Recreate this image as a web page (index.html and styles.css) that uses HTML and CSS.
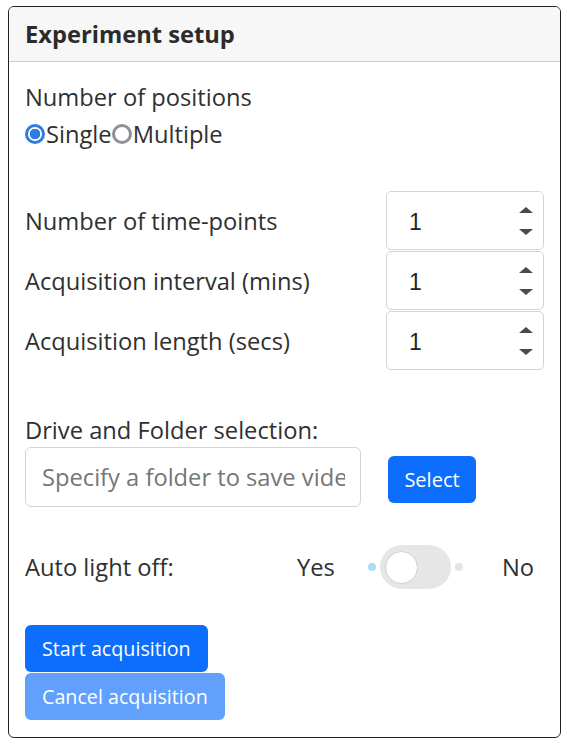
FILE: index.html
```html
<!DOCTYPE html>
<html>
<head>
<meta charset="utf-8">
<link rel="stylesheet" href="styles.css">
</head>
<body>
<div class="card">
  <div class="card-header">Experiment setup</div>
  <div class="card-body">
    <div class="label">Number of positions</div>
    <div class="radios">
      <span class="radio checked"></span><span class="radio-label">Single</span><span class="radio"></span><span class="radio-label">Multiple</span>
    </div>

    <div class="num-rows">
      <div class="num-row">
        <span class="label">Number of time-points</span>
        <div class="num-input"><span class="num-val">1</span><span class="spin"><span class="up"></span><span class="down"></span></span></div>
      </div>
      <div class="num-row">
        <span class="label">Acquisition interval (mins)</span>
        <div class="num-input"><span class="num-val">1</span><span class="spin"><span class="up"></span><span class="down"></span></span></div>
      </div>
      <div class="num-row">
        <span class="label">Acquisition length (secs)</span>
        <div class="num-input"><span class="num-val">1</span><span class="spin"><span class="up"></span><span class="down"></span></span></div>
      </div>
    </div>

    <div class="label folder-label">Drive and Folder selection:</div>
    <div class="folder-row">
      <div class="text-input"><span class="placeholder">Specify a folder to save videos</span></div>
      <button class="btn btn-select">Select</button>
    </div>

    <div class="light-row">
      <span class="label light-label">Auto light off:</span>
      <span class="label yes">Yes</span>
      <span class="toggle">
        <span class="dot dot-on"></span>
        <span class="track"><span class="knob"></span></span>
        <span class="dot dot-off"></span>
      </span>
      <span class="label no">No</span>
    </div>

    <div class="actions">
      <button class="btn btn-start">Start acquisition</button>
      <button class="btn btn-cancel">Cancel acquisition</button>
    </div>
  </div>
</div>
</body>
</html>
```
FILE: styles.css
```css
* { box-sizing: border-box; }
body {
  margin: 0;
  padding: 6px 8px 0 8px;
  font-family: "Open Sans", sans-serif;
  color: #212529;
  background: #fff;
}
.card {
  width: 553px;
  height: 732px;
  border: 1px solid #222;
  border-radius: 6px;
  overflow: hidden;
}
.card-header {
  height: 55px;
  background: #f7f7f7;
  border-bottom: 1px solid #cfcfcf;
  font-weight: 700;
  font-size: 23.7px;
  padding: 0 16px;
  display: flex;
  align-items: center;
  color: #2b2b2b;
}
.card-body {
  padding: 20px 16px 0 16px;
}
.label {
  font-size: 23.7px;
  line-height: 30px;
  color: #303030;
}
.radios {
  display: flex;
  align-items: center;
  margin-top: 7px;
  font-size: 23.7px;
  line-height: 30px;
  color: #303030;
}
.radio {
  width: 20px;
  height: 20px;
  border-radius: 50%;
  border: 3px solid #8f8f99;
  display: inline-block;
  flex: none;
  margin-right: 1px;
}
.radio.checked {
  border-color: #2f7de1;
  background: radial-gradient(circle, #2f7de1 0 5px, #fff 5.5px);
}
.num-rows {
  margin-top: 42px;
  display: flex;
  flex-direction: column;
  gap: 1px;
}
.num-row {
  display: flex;
  align-items: center;
  justify-content: space-between;
  height: 59px;
}
.num-input {
  width: 158px;
  height: 59px;
  border: 1px solid #d4d4d4;
  border-radius: 5px;
  display: flex;
  align-items: center;
  justify-content: space-between;
  padding: 0 10px 0 22px;
}
.num-val {
  font-family: "Liberation Sans", Arial, sans-serif;
  font-size: 23px;
  color: #222;
  padding-top: 3px;
}
.spin {
  display: flex;
  flex-direction: column;
  justify-content: space-between;
  height: 28px;
}
.up, .down {
  width: 0;
  height: 0;
  border-left: 7px solid transparent;
  border-right: 7px solid transparent;
}
.up { border-bottom: 6px solid #4a4a4a; }
.down { border-top: 6px solid #4a4a4a; }
.folder-label {
  margin-top: 45px;
}
.folder-row {
  display: flex;
  align-items: center;
  gap: 27px;
  margin-top: 2px;
}
.text-input {
  width: 336px;
  height: 60px;
  border: 1px solid #d4d4d4;
  border-radius: 6px;
  font-size: 23.7px;
  color: #767676;
  padding: 0 15px 0 16px;
  display: flex;
  align-items: center;
}
.placeholder {
  display: block;
  width: 100%;
  overflow: hidden;
  white-space: nowrap;
}
.btn {
  font-family: "Open Sans", sans-serif;
  border: none;
  color: #fff;
  background: #0d6efd;
  border-radius: 6px;
  padding: 0 17px;
  cursor: pointer;
}
.btn-select {
  height: 47px;
  font-size: 20px;
  margin-top: 4px;
  width: 88px;
  padding: 0;
}
.light-row {
  display: flex;
  align-items: center;
  margin-top: 37px;
  height: 46px;
}
.light-label { width: 272px; }
.yes { width: 71px; }
.toggle {
  display: flex;
  align-items: center;
  width: 134px;
}
.dot {
  width: 8px;
  height: 8px;
  border-radius: 50%;
  flex: none;
}
.dot-on { background: #a9dcf7; margin-right: 4px; }
.dot-off { background: #e4e4e4; margin-left: 4px; }
.track {
  width: 71px;
  height: 44px;
  border-radius: 22px;
  background: #e6e6e6;
  display: flex;
  align-items: center;
  padding-left: 5px;
  flex: none;
}
.knob {
  width: 33px;
  height: 33px;
  border-radius: 50%;
  background: #fff;
  border: 1px solid #cfcfcf;
}
.actions {
  margin-top: 35px;
  display: flex;
  flex-direction: column;
  align-items: flex-start;
  gap: 1px;
}
.btn-start, .btn-cancel {
  height: 47px;
  font-size: 19.7px;
}
.btn-cancel {
  background: #62a0fe;
}
```
